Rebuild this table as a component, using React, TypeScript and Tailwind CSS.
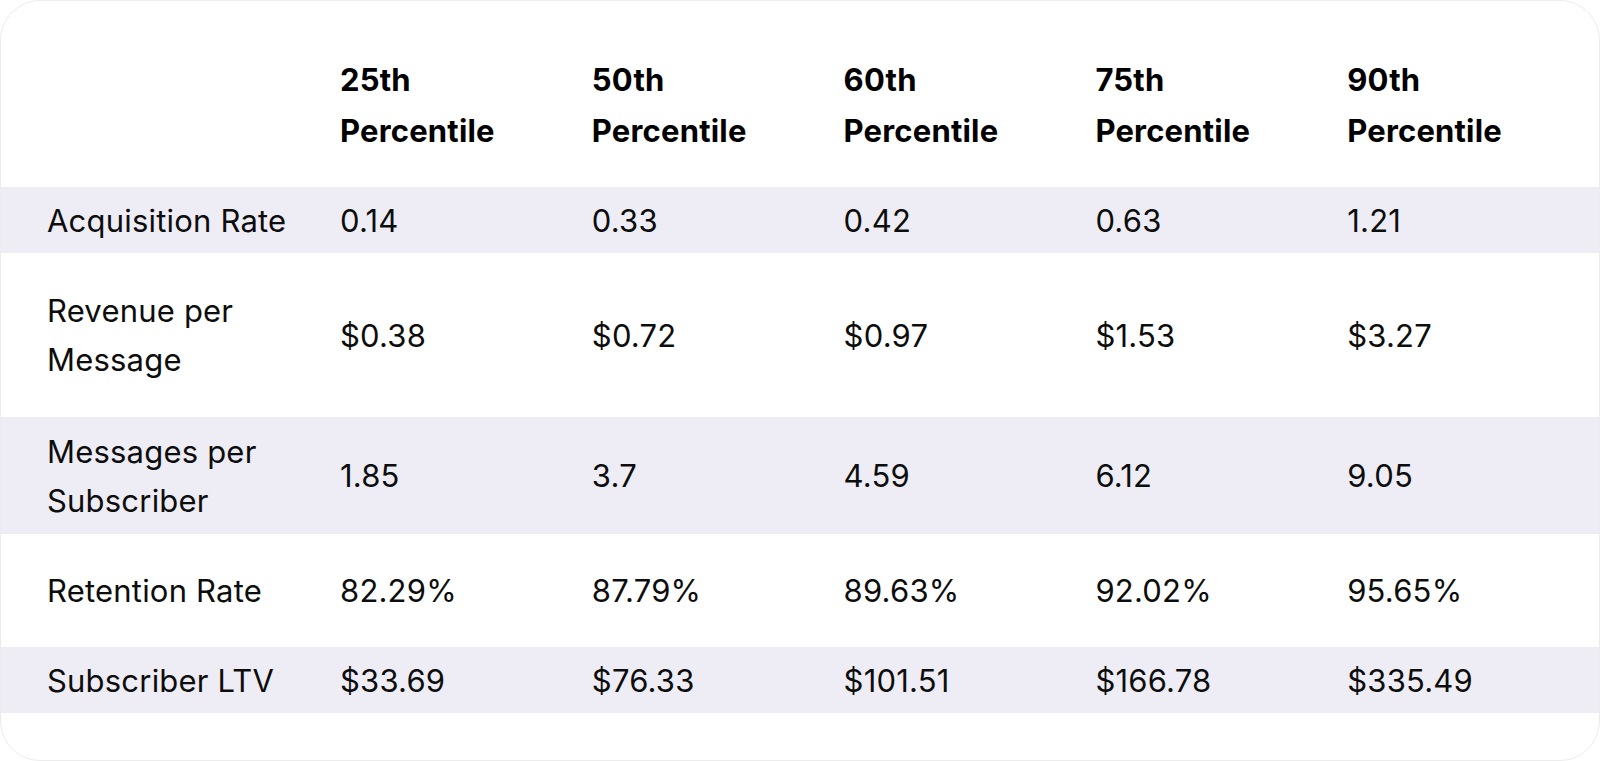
const percentiles = ["25th", "50th", "60th", "75th", "90th"];

const rows = [
  { label: "Acquisition Rate", values: ["0.14", "0.33", "0.42", "0.63", "1.21"], h: "h-[66px]", shaded: true },
  { label: "Revenue per Message", values: ["$0.38", "$0.72", "$0.97", "$1.53", "$3.27"], h: "h-[164px]", shaded: false },
  { label: "Messages per Subscriber", values: ["1.85", "3.7", "4.59", "6.12", "9.05"], h: "h-[117px]", shaded: true },
  { label: "Retention Rate", values: ["82.29%", "87.79%", "89.63%", "92.02%", "95.65%"], h: "h-[113px]", shaded: false },
  { label: "Subscriber LTV", values: ["$33.69", "$76.33", "$101.51", "$166.78", "$335.49"], h: "h-[66px]", shaded: true },
];

export default function App() {
  return (
    <div
      className="w-[1600px] h-[761px] bg-white rounded-[40px] border border-[#ececec] overflow-hidden text-[#0d0d0d] tracking-[0.2px]"
      style={{ fontFamily: "Inter, 'Noto Sans', sans-serif" }}
    >
      <div className="grid grid-cols-[339px_repeat(5,minmax(0,1fr))] h-[186px] pt-[53px]">
        <div />
        {percentiles.map((p) => (
          <div key={p} className="text-[31px] leading-[51px] font-bold text-black">
            <div>{p}</div>
            <div>Percentile</div>
          </div>
        ))}
      </div>

      {rows.map((row) => (
        <div
          key={row.label}
          className={`grid grid-cols-[339px_repeat(5,minmax(0,1fr))] items-center ${row.h} ${
            row.shaded ? "bg-[#eeedf6]" : "bg-white"
          }`}
        >
          <div className="pl-[46px] max-w-[310px] text-[31px] leading-[49px]">{row.label}</div>
          {row.values.map((v, i) => (
            <div key={i} className="text-[31px] leading-[49px]">
              {v}
            </div>
          ))}
        </div>
      ))}
    </div>
  );
}
